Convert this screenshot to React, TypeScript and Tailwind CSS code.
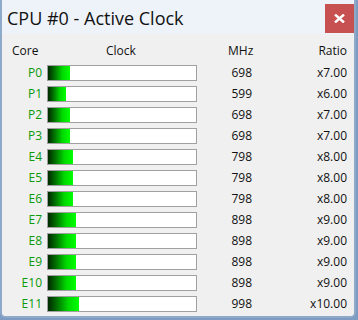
const rows = [
  { core: 'P0', mhz: 698, ratio: 'x7.00' },
  { core: 'P1', mhz: 599, ratio: 'x6.00' },
  { core: 'P2', mhz: 698, ratio: 'x7.00' },
  { core: 'P3', mhz: 698, ratio: 'x7.00' },
  { core: 'E4', mhz: 798, ratio: 'x8.00' },
  { core: 'E5', mhz: 798, ratio: 'x8.00' },
  { core: 'E6', mhz: 798, ratio: 'x8.00' },
  { core: 'E7', mhz: 898, ratio: 'x9.00' },
  { core: 'E8', mhz: 898, ratio: 'x9.00' },
  { core: 'E9', mhz: 898, ratio: 'x9.00' },
  { core: 'E10', mhz: 898, ratio: 'x9.00' },
  { core: 'E11', mhz: 998, ratio: 'x10.00' },
];

const font = { fontFamily: '"Open Sans", "Noto Sans", Arial, sans-serif' };

export default function App() {
  return (
    <div className="h-[320px] w-[358px] overflow-hidden bg-[#7e9cc2]" style={font}>
      <div className="flex h-[318px] w-[356px] flex-col rounded-b-[6px] border-x-2 border-b-2 border-[#8fa9c9] bg-[#eef3f9]">
        <div className="flex h-[34px] shrink-0 items-start justify-between">
          <div className="pl-[5px] pt-[6px] text-[18px] leading-[24px] text-[#111]">CPU #0 - Active Clock</div>
          <div className="mt-[4px] flex h-[29px] w-[29px] items-center justify-center bg-[#c75050]">
            <svg width="11" height="9" viewBox="0 0 11 9">
              <path d="M1 0.5 L10 8.5 M10 0.5 L1 8.5" stroke="#fff" strokeWidth="2.4" />
            </svg>
          </div>
        </div>
        <div className="flex-1 rounded-b-[4px] bg-[#f0f0f0] pt-[8px] text-[12px] leading-[16px] text-[#111]">
          <div className="flex h-[18px] items-center">
            <div className="w-[38px] pl-[10px]">Core</div>
            <div className="w-[160px] pl-[66px]">Clock</div>
            <div className="w-[54px] pl-[28px]">MHz</div>
            <div className="w-[93px] text-right">Ratio</div>
          </div>
          <div className="mt-[2px] flex flex-col">
            {rows.map((r) => (
              <div key={r.core} className="flex h-[21px] items-center">
                <div className="w-[40px] text-right text-[#0a9a0a]">{r.core}</div>
                <div className="ml-[5px] h-[16px] w-[150px] border border-[#a0a0a0] bg-white">
                  <div
                    className="h-full bg-gradient-to-r from-[#002a00] via-[#00d800] via-65% to-[#00ff00]"
                    style={{ width: Math.round((r.mhz / 4800) * 148) }}
                  />
                </div>
                <div className="w-[55px] text-right">{r.mhz}</div>
                <div className="w-[95px] text-right">{r.ratio}</div>
              </div>
            ))}
          </div>
        </div>
      </div>
    </div>
  );
}
